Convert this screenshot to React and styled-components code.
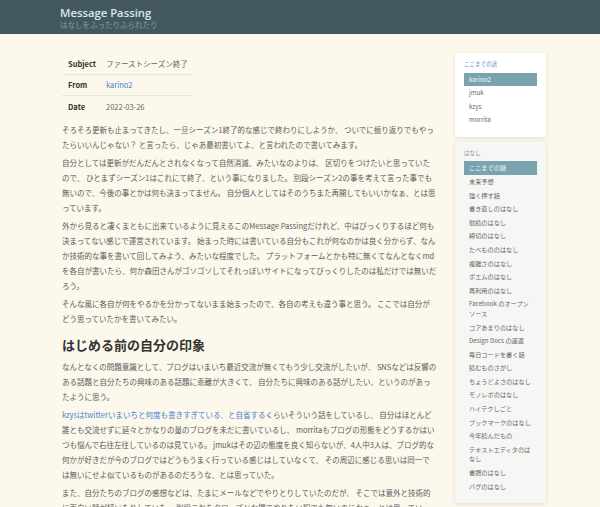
import React from 'react';
import styled, { createGlobalStyle } from 'styled-components';

function App() {
  return (
    <>
      <GlobalStyle />
      <Header>
        <HeaderInner>
          <SiteTitle>Message Passing</SiteTitle>
          <SiteSub>はなしをふったりふられたり</SiteSub>
        </HeaderInner>
      </Header>
      <Page>
        <Main>
          <MetaTable>
            <tbody>
              {meta.map(row => (
                <MetaRow key={row.label}>
                  <MetaLabel>{row.label}</MetaLabel>
                  <MetaValue>
                    {row.link ? <Link href="#">{row.value}</Link> : row.value}
                  </MetaValue>
                </MetaRow>
              ))}
            </tbody>
          </MetaTable>

          <P>
            そろそろ更新も止まってきたし、一旦シーズン1終了的な感じで終わりにしようか、 ついでに振り返りでもやったらいいんじゃない？ と言ったら、じゃあ最初書いてよ、と言われたので書いてみます。
          </P>
          <P>
            自分としては更新がだんだんとされなくなって自然消滅、みたいなのよりは、 区切りをつけたいと思っていたので、 ひとまずシーズン1はこれにて終了、という事になりました。 別段シーズン2の事を考えて言った事でも無いので、今後の事とかは何も決まってません。 自分個人としてはそのうちまた再開してもいいかなぁ、とは思っています。
          </P>
          <P>
            外から見ると凄くまともに出来ているように見えるこのMessage Passingだけれど、中はびっくりするほど何も決まってない感じで運営されています。 始まった時には書いている自分もこれが何なのかは良く分からず、なんか技術的な事を書いて回してみよう、みたいな程度でした。 プラットフォームとかも特に無くてなんとなくmdを各自が書いたら、何か森田さんがゴソゴソしてそれっぽいサイトになってびっくりしたのは私だけでは無いだろう。
          </P>
          <P>
            そんな風に各自が何をやるかを分かってないまま始まったので、各自の考えも違う事と思う。 ここでは自分がどう思っていたかを書いてみたい。
          </P>
          <H2>はじめる前の自分の印象</H2>
          <P>
            なんとなくの問題意識として、ブログはいまいち最近交流が無くてもう少し交流がしたいが、 SNSなどは反響のある話題と自分たちの興味のある話題に乖離が大きくて、 自分たちに興味のある話がしたい、というのがあったように思う。
          </P>
          <P>
            <Link href="#">kzysはtwitterいまいちと何度も書きすぎている、と自省する</Link>くらいそういう話をしているし、 自分はほとんど誰とも交流せずに延々とかなりの量のブログを未だに書いているし、 morritaもブログの形態をどうするかはいつも悩んで右往左往しているのは見ている。 jmukはその辺の態度を良く知らないが、4人中3人は、ブログ的な何かが好きだが今のブログではどうもうまく行っている感じはしていなくて、 その周辺に感じる思いは同一では無いにせよ似ているものがあるのだろうな、とは思っていた。
          </P>
          <P>
            また、自分たちのブログの感想などは、たまにメールなどでやりとりしていたのだが、 そこでは意外と技術的に面白い話が続いたりしていた。 別段これをクローズドな場でやりたい訳でも無いのになぁ、とは思っていた。
          </P>
        </Main>

        <Side>
          <SideBox>
            <SideHeading $accent>ここまでの話</SideHeading>
            <SideList>
              {authors.map((name, i) => (
                <SideItem key={name} $active={i === 0}>{name}</SideItem>
              ))}
            </SideList>
          </SideBox>
          <SideBox $muted>
            <SideHeading>はなし</SideHeading>
            <SideList>
              {topics.map((t, i) => (
                <SideItem key={t} $active={i === 0}>{t}</SideItem>
              ))}
            </SideList>
          </SideBox>
        </Side>
      </Page>
    </>
  );
}

const meta = [
  { label: 'Subject', value: 'ファーストシーズン終了' },
  { label: 'From', value: 'karino2', link: true },
  { label: 'Date', value: '2022-03-26' },
];

const authors = ['karino2', 'jmuk', 'kzys', 'morrita'];

const topics = [
  'ここまでの話',
  '未来予想',
  '強く押す話',
  '書き直しのはなし',
  '勤読のはなし',
  '締切のはなし',
  'たべもののはなし',
  '複雑さのはなし',
  'ポエムのはなし',
  '再利用のはなし',
  'Facebook のオープンソース',
  'コアあまりのはなし',
  'Design Docs の速返',
  '毎日コードを書く話',
  '読むものさがし',
  'ちょうどよさのはなし',
  'モノレボのはなし',
  'ハイテクしごと',
  'ブックマークのはなし',
  '今年読んだもの',
  'テキストエディタのはなし',
  '書譜のはなし',
  'バグのはなし',
];

const GlobalStyle = createGlobalStyle`
  html, body {
    margin: 0;
    padding: 0;
    background: #fcf8ec;
  }
  body {
    font-family: "Noto Sans CJK JP", "Noto Sans", sans-serif;
    color: #5a5a5a;
  }
`;

const Header = styled.header`
  background: #44595f;
  height: 34px;
`;

const HeaderInner = styled.div`
  padding: 6px 0 0 60px;
`;

const SiteTitle = styled.div`
  font-family: "Open Sans", "Noto Sans", sans-serif;
  font-weight: 600;
  font-size: 11.3px;
  line-height: 14px;
  color: #d9e8f0;
`;

const SiteSub = styled.div`
  font-size: 7.5px;
  line-height: 9px;
  color: #7d9fab;
`;

const Page = styled.div`
  display: flex;
  align-items: flex-start;
  gap: 18px;
  padding: 19px 0 0 60px;
`;

const Main = styled.main`
  width: 375px;
  padding: 0 0 0 2px;
`;

const MetaTable = styled.table`
  border-collapse: collapse;
  width: 131px;
  margin-bottom: 5px;
  font-size: 7.5px;
`;

const MetaRow = styled.tr`
  height: 21.3px;
  & + & td {
    border-top: 1px solid #ebe6d8;
  }
`;

const MetaLabel = styled.td`
  font-weight: 700;
  color: #333;
  padding: 0 0 0 6px;
  width: 38px;
`;

const MetaValue = styled.td`
  color: #666;
  padding: 0;
`;

const Link = styled.a`
  color: #4a7fd0;
  text-decoration: none;
`;

const P = styled.p`
  margin: 0 0 3px;
  font-size: 7.5px;
  line-height: 15px;
`;

const H2 = styled.h2`
  margin: 10px 0 5px;
  font-size: 13px;
  line-height: 18px;
  font-weight: 700;
  color: #333;
`;

const Side = styled.aside`
  width: 91px;
  display: flex;
  flex-direction: column;
  gap: 5px;
`;

const SideBox = styled.div`
  background: ${p => (p.$muted ? '#f6f6f4' : '#ffffff')};
  border-radius: 2px;
  box-shadow: 0 1px 4px rgba(0, 0, 0, 0.12);
  padding: 7px 9px 10px;
`;

const SideHeading = styled.div`
  font-size: 5.5px;
  line-height: 8px;
  color: ${p => (p.$accent ? '#5b8dc9' : '#8a8a8a')};
  margin-bottom: 4.5px;
`;

const SideList = styled.ul`
  list-style: none;
  margin: 0;
  padding: 0;
`;

const SideItem = styled.li`
  font-size: 6.2px;
  line-height: 9.6px;
  padding: 2px 3px 2px 5px;
  color: ${p => (p.$active ? '#f4f8f9' : '#666')};
  background: ${p => (p.$active ? '#79a4af' : 'transparent')};
`;

export default App;
